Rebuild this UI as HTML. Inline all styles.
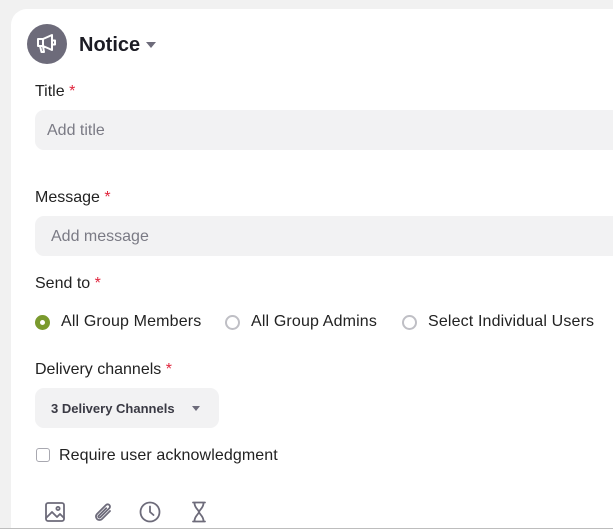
<!DOCTYPE html>
<html style="overflow:hidden;width:613px;height:529px"><head><style>
body{margin:0;width:613px;height:529px;background:#f1f1f1;font-family:"Liberation Sans",sans-serif;overflow:hidden;position:relative;color:#222}
.card{position:absolute;left:11px;top:9px;width:640px;height:520px;background:#fff;border-radius:16px 16px 0 0}
.abs{position:absolute}
.lbl{font-size:16px;color:#222}
.req{color:#e0243c}
.inp{position:absolute;left:35px;width:600px;height:40px;background:#f2f2f3;border-radius:9px;font-size:16px;color:#7a7a84;line-height:40px;box-sizing:border-box;padding-top:1px}
.radio{position:absolute;top:315px;width:11px;height:11px;border:2px solid #bfbfc5;border-radius:50%}
.rt{position:absolute;top:313px;font-size:16px;color:#222;letter-spacing:0.15px}
</style></head><body>
<div class="card"></div>
<div class="abs" style="left:27px;top:24px;width:40px;height:40px;border-radius:50%;background:#6d6b7a"></div>
<svg class="abs" style="left:35px;top:33px" width="24" height="22" viewBox="0 0 24 22"><path d="M3 6h5l9-4v15l-9-4H3z M5 13l1.5 6h2.5l-1-6 M8 6v7 M18 7.5h2v4h-2" fill="none" stroke="#fff" stroke-width="2" stroke-linejoin="round"/></svg>
<div class="abs" style="left:79px;top:34px;font-size:20px;font-weight:bold;color:#1c1c24">Notice</div>
<div class="abs" style="left:146px;top:42px;width:0;height:0;border-left:5px solid transparent;border-right:5px solid transparent;border-top:6px solid #6d6b7a"></div>
<div class="abs lbl" style="left:35px;top:83px">Title <span class="req">*</span></div>
<div class="inp" style="top:110px;padding-left:12px">Add title</div>
<div class="abs lbl" style="left:35px;top:189px">Message <span class="req">*</span></div>
<div class="inp" style="top:216px;padding-left:16px">Add message</div>
<div class="abs lbl" style="left:35px;top:275px">Send to <span class="req">*</span></div>
<div class="radio" style="left:35px;border-color:#7a9a2e;background:#7a9a2e"><div style="width:5px;height:5px;background:#fff;border-radius:50%;margin:3px"></div></div>
<div class="rt" style="left:61px">All Group Members</div>
<div class="radio" style="left:225px"></div>
<div class="rt" style="left:251px">All Group Admins</div>
<div class="radio" style="left:402px"></div>
<div class="rt" style="left:428px">Select Individual Users</div>
<div class="abs lbl" style="left:35px;top:361px">Delivery channels <span class="req">*</span></div>
<div class="abs" style="left:35px;top:388px;width:184px;height:40px;background:#f2f2f3;border-radius:9px"></div>
<div class="abs" style="left:51px;top:401px;font-size:13px;font-weight:bold;color:#3a3a44">3 Delivery Channels</div>
<div class="abs" style="left:192px;top:406px;width:0;height:0;border-left:4px solid transparent;border-right:4px solid transparent;border-top:5px solid #6d6b7a"></div>
<div class="abs" style="left:36px;top:448px;width:12px;height:12px;border:1.5px solid #a8a8b0;border-radius:3px"></div>
<div class="abs lbl" style="left:59px;top:447px;letter-spacing:0.1px">Require user acknowledgment</div>
<svg class="abs" style="left:44px;top:500px" width="170" height="24" viewBox="0 0 170 24" fill="none" stroke="#6d6b7a" stroke-width="1.8" stroke-linecap="round" stroke-linejoin="round">
<rect x="2" y="3" width="18" height="18" rx="2"/><circle cx="14" cy="8.5" r="1.6"/><path d="M2 18l6-6 5 5 3-3 4 4"/>
<path d="M66 11l-8 8a3.5 3.5 0 0 1-5-5l9-9a2.3 2.3 0 0 1 3.3 3.3l-9 9a1.1 1.1 0 0 1-1.6-1.6l7.5-7.5"/>
<circle cx="106" cy="12" r="9.5"/><path d="M106 6.5v5.5l3.5 3"/>
<path d="M149 2.5h12M149 21.5h12M150.5 3c0 5 4 6.5 4.5 9-0.5 2.5-4.5 4-4.5 9M159.5 3c0 5-4 6.5-4.5 9 0.5 2.5 4.5 4 4.5 9"/>
</svg>
<div class="abs" style="left:0;top:528px;width:613px;height:1px;background:#bdbdbd"></div>
</body></html>
